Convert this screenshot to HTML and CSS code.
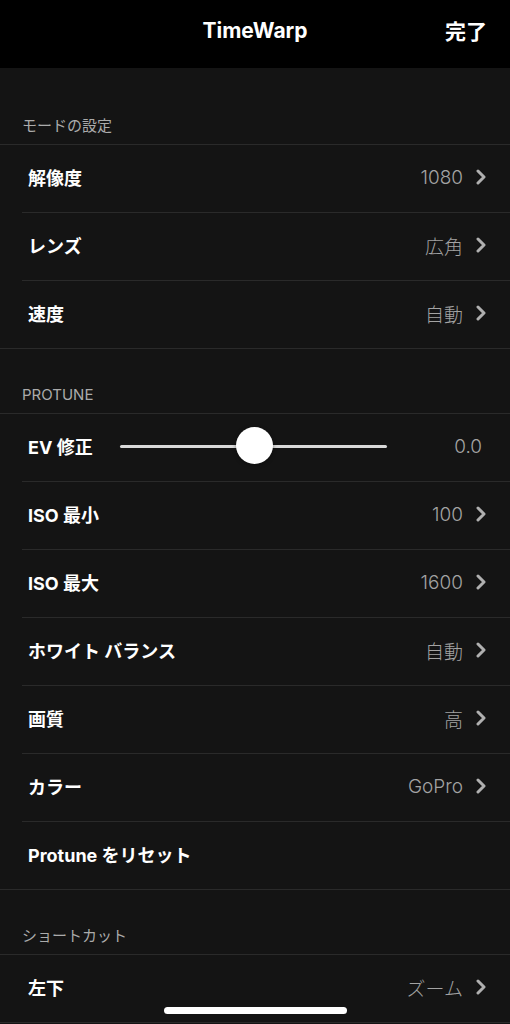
FILE: index.html
```html
<!DOCTYPE html>
<html lang="ja">
<head>
  <meta charset="UTF-8" />
  <meta name="viewport" content="width=device-width, initial-scale=1.0"/>
  <title>TimeWarp</title>
  <link rel="stylesheet" href="styles.css">
</head>
<body>
  <header class="topbar">
    <span></span>
    <h1 class="title">TimeWarp</h1>
    <button class="done">完了</button>
  </header>

  <main class="settings">
    <div class="section-label first">モードの設定</div>
    <div class="group">
      <div class="row">
        <span class="label">解像度</span>
        <span class="value">1080</span>
        <svg class="chevron" viewBox="0 0 10 16"><polyline points="2,2 8,8 2,14"/></svg>
      </div>
      <div class="row">
        <span class="label">レンズ</span>
        <span class="value">広角</span>
        <svg class="chevron" viewBox="0 0 10 16"><polyline points="2,2 8,8 2,14"/></svg>
      </div>
      <div class="row">
        <span class="label">速度</span>
        <span class="value">自動</span>
        <svg class="chevron" viewBox="0 0 10 16"><polyline points="2,2 8,8 2,14"/></svg>
      </div>
    </div>

    <div class="section-label">PROTUNE</div>
    <div class="group">
      <div class="row">
        <span class="label ev">EV 修正</span>
        <div class="slider">
          <div class="track"></div>
          <div class="thumb"></div>
        </div>
        <span class="value plain">0.0</span>
      </div>
      <div class="row">
        <span class="label">ISO 最小</span>
        <span class="value">100</span>
        <svg class="chevron" viewBox="0 0 10 16"><polyline points="2,2 8,8 2,14"/></svg>
      </div>
      <div class="row">
        <span class="label">ISO 最大</span>
        <span class="value">1600</span>
        <svg class="chevron" viewBox="0 0 10 16"><polyline points="2,2 8,8 2,14"/></svg>
      </div>
      <div class="row">
        <span class="label">ホワイト バランス</span>
        <span class="value">自動</span>
        <svg class="chevron" viewBox="0 0 10 16"><polyline points="2,2 8,8 2,14"/></svg>
      </div>
      <div class="row">
        <span class="label">画質</span>
        <span class="value">高</span>
        <svg class="chevron" viewBox="0 0 10 16"><polyline points="2,2 8,8 2,14"/></svg>
      </div>
      <div class="row">
        <span class="label">カラー</span>
        <span class="value">GoPro</span>
        <svg class="chevron" viewBox="0 0 10 16"><polyline points="2,2 8,8 2,14"/></svg>
      </div>
      <div class="row">
        <span class="label">Protune をリセット</span>
      </div>
    </div>

    <div class="section-label">ショートカット</div>
    <div class="group">
      <div class="row">
        <span class="label">左下</span>
        <span class="value">ズーム</span>
        <svg class="chevron" viewBox="0 0 10 16"><polyline points="2,2 8,8 2,14"/></svg>
      </div>
    </div>
  </main>

  <div class="home-indicator"></div>
</body>
</html>
```

FILE: styles.css
```css
* {
  margin: 0;
  padding: 0;
  box-sizing: border-box;
}

body {
  font-family: Inter, "Noto Sans CJK JP", sans-serif;
  background-color: #141414;
  color: #fff;
  height: 1024px;
  overflow: hidden;
}

.topbar {
  height: 68px;
  background-color: #000;
  display: grid;
  grid-template-columns: 1fr auto 1fr;
  align-items: center;
  padding: 0 23px 8px;
}

.title {
  font-size: 21px;
  font-weight: 700;
}

.done {
  justify-self: end;
  background: none;
  border: none;
  color: #fff;
  font-family: inherit;
  font-size: 21px;
  font-weight: 700;
}

.section-label {
  height: 64px;
  display: flex;
  align-items: flex-end;
  padding: 0 22px 9px;
  font-size: 15px;
  color: #ababab;
}

.section-label.first {
  height: 76px;
}

.group {
  border-top: 1px solid #2a2a2a;
  border-bottom: 1px solid #2a2a2a;
}

.row {
  height: 67px;
  margin-left: 22px;
  padding: 0 24px 3px 6px;
  display: flex;
  align-items: center;
}

.row + .row {
  height: 68px;
  border-top: 1px solid #2a2a2a;
}

.label {
  font-size: 18px;
  font-weight: 700;
}

.label.ev {
  width: 92px;
}

.value {
  margin-left: auto;
  font-size: 19px;
  font-weight: 300;
  color: #a3a3a3;
}

.value.plain {
  margin-right: 4px;
}

.chevron {
  width: 10px;
  height: 16px;
  margin-left: 13px;
  fill: none;
  stroke: #b0b0b0;
  stroke-width: 3;
  stroke-linecap: round;
  stroke-linejoin: round;
}

.slider {
  position: relative;
  width: 267px;
  height: 38px;
  display: flex;
  align-items: center;
}

.track {
  width: 100%;
  height: 3px;
  border-radius: 2px;
  background-color: #d9d9d9;
}

.thumb {
  position: absolute;
  left: 116px;
  top: 0;
  width: 37px;
  height: 37px;
  border-radius: 50%;
  background-color: #fff;
  box-shadow: 0 1px 4px rgba(0, 0, 0, 0.4);
}

.home-indicator {
  position: fixed;
  left: 164px;
  bottom: 10px;
  width: 183px;
  height: 7px;
  border-radius: 4px;
  background-color: #fff;
}
```
